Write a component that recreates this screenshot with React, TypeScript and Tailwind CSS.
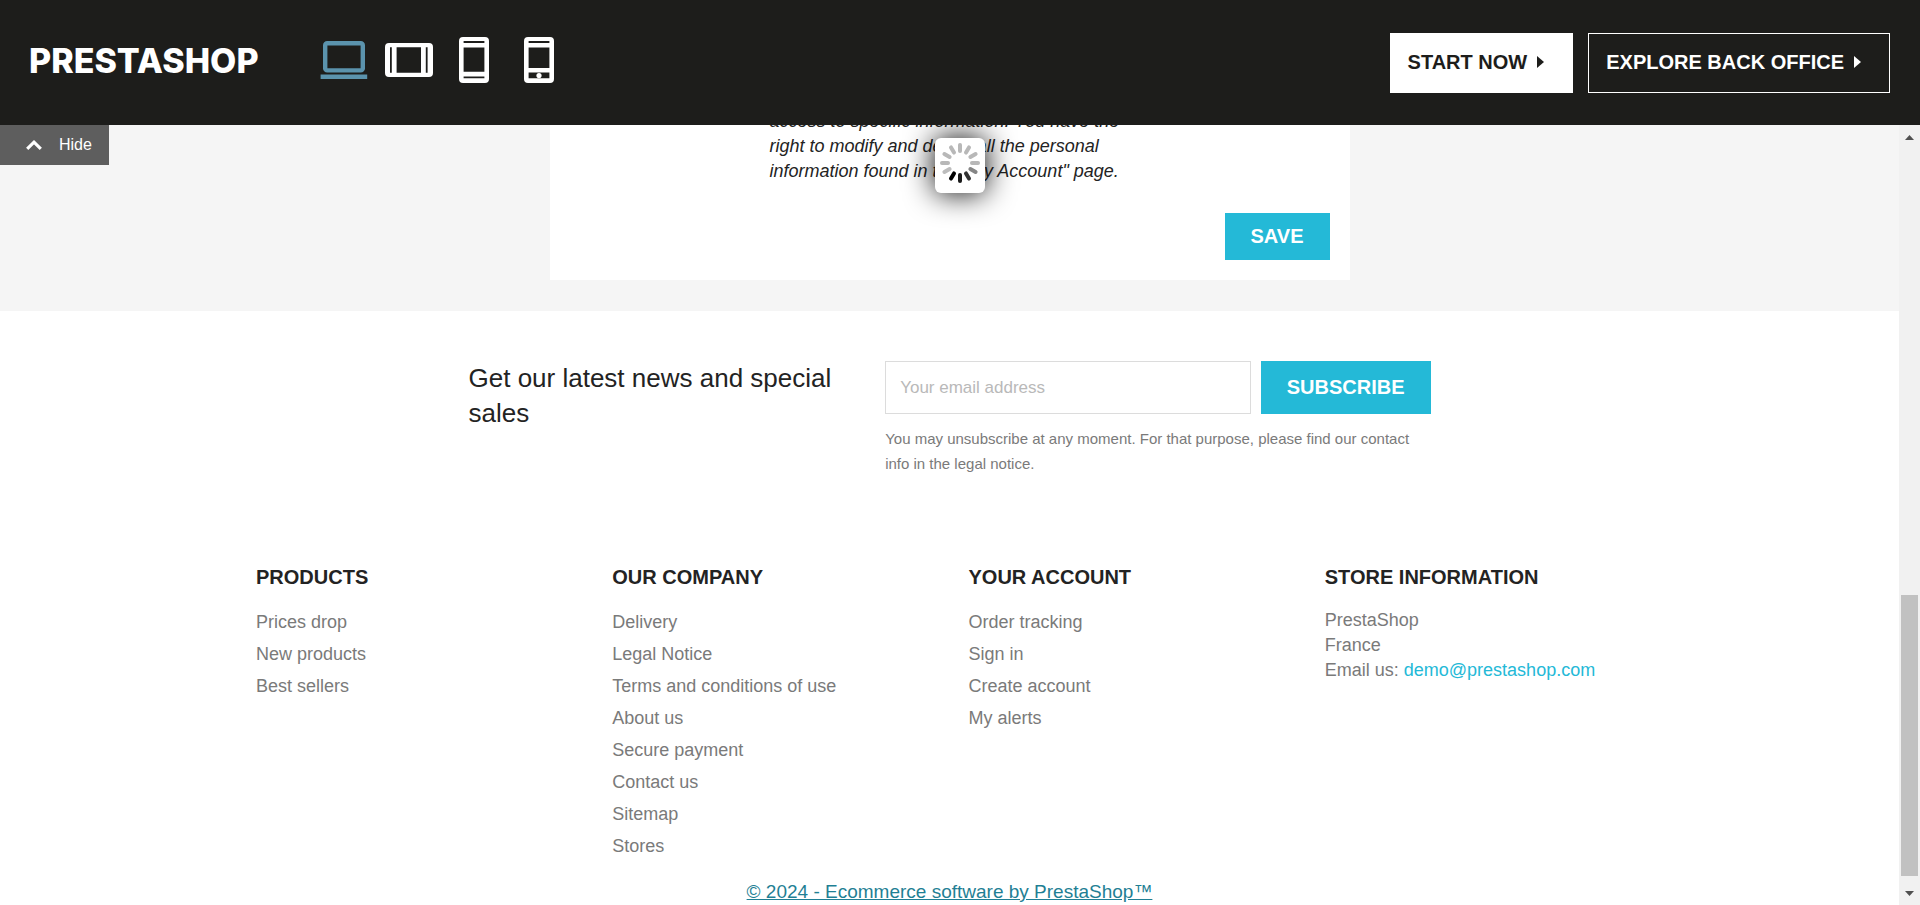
import type { ReactNode } from 'react';

type LinkGroup = { title: string; links: string[] };

const linkGroups: LinkGroup[] = [
  { title: 'PRODUCTS', links: ['Prices drop', 'New products', 'Best sellers'] },
  {
    title: 'OUR COMPANY',
    links: [
      'Delivery',
      'Legal Notice',
      'Terms and conditions of use',
      'About us',
      'Secure payment',
      'Contact us',
      'Sitemap',
      'Stores',
    ],
  },
  { title: 'YOUR ACCOUNT', links: ['Order tracking', 'Sign in', 'Create account', 'My alerts'] },
];

const spokes = [
  '#b8b8b8', '#b8b8b8', '#b8b8b8', '#b8b8b8', '#868686', '#333333',
  '#1a1a1a', '#000000', '#bdbdbd', '#b8b8b8', '#b8b8b8', '#b8b8b8',
];

function DeviceButton({ label, children }: { label: string; children: ReactNode }) {
  return (
    <button type="button" aria-label={label} className="flex w-12 cursor-pointer justify-center">
      {children}
    </button>
  );
}

function Devices() {
  return (
    <div className="flex items-center gap-[17px]">
      <DeviceButton label="Desktop">
        <svg width="48" height="46" viewBox="0 0 48 46">
          <rect x="5.2" y="6.2" width="37.6" height="27.2" rx="2" fill="none" stroke="#5b93ad" strokeWidth="4.4" />
          <rect x="0.6" y="37.5" width="46.6" height="4.5" fill="#5b93ad" />
        </svg>
      </DeviceButton>
      <DeviceButton label="Tablet landscape">
        <svg width="48" height="46" viewBox="0 0 48 46" fill="#fff" fillRule="evenodd">
          <path d="M4 6h40a4 4 0 0 1 4 4v26a4 4 0 0 1-4 4H4a4 4 0 0 1-4-4V10a4 4 0 0 1 4-4zM5 10.3v25.4h1.8v-25.4zM11.6 10.3v25.4h24.4v-25.4zM40.8 10.3v25.4h1.8v-25.4z" />
        </svg>
      </DeviceButton>
      <DeviceButton label="Tablet portrait">
        <svg width="30" height="46" viewBox="0 0 30 46" fill="#fff" fillRule="evenodd">
          <path d="M4 0h22a4 4 0 0 1 4 4v38a4 4 0 0 1-4 4H4a4 4 0 0 1-4-4V4a4 4 0 0 1 4-4zM4.6 4.1v1.9h20.8v-1.9zM4.6 10.6v24.2h20.8v-24.2zM4.6 39.4v1.9h20.8v-1.9z" />
        </svg>
      </DeviceButton>
      <DeviceButton label="Mobile">
        <svg width="30" height="46" viewBox="0 0 30 46" fill="#fff" fillRule="evenodd">
          <path d="M4 0h22a4 4 0 0 1 4 4v38a4 4 0 0 1-4 4H4a4 4 0 0 1-4-4V4a4 4 0 0 1 4-4zM4.6 4.1v1.9h20.8v-1.9zM4.6 10.6v20.4h20.8v-20.4zM4.6 35.6v5.7h20.8v-5.7z" />
          <circle cx="15" cy="38.5" r="2.6" />
        </svg>
      </DeviceButton>
    </div>
  );
}

function Caret() {
  return (
    <svg width="7" height="12" viewBox="0 0 7 12" fill="currentColor">
      <path d="M0 0l7 6-7 6z" />
    </svg>
  );
}

function Header() {
  return (
    <header className="relative z-10 flex h-[125px] shrink-0 items-center justify-between bg-[#1d1d1b] pr-[30px] pl-[29px]">
      <div className="flex items-center pb-[5px]">
        <a href="#home" className="w-[291px] pt-0.5 font-[Inter,sans-serif] text-[34px] leading-10 font-extrabold text-white">
          PRESTASHOP
        </a>
        <Devices />
      </div>
      <nav className="flex gap-[15px] text-xl font-bold">
        <a href="#start" className="flex h-[60px] items-center gap-2.5 border border-white bg-white pr-7 pb-0.5 pl-[17px] text-[#1d1d1b]">
          START NOW
          <Caret />
        </a>
        <a href="#office" className="flex h-[60px] items-center gap-2.5 border border-white pr-7 pb-0.5 pl-[17px] text-white">
          EXPLORE BACK OFFICE
          <Caret />
        </a>
      </nav>
    </header>
  );
}

function Spinner() {
  return (
    <div
      role="status"
      aria-label="Loading"
      className="absolute top-[13px] left-1/2 flex h-[55px] w-[50px] -translate-x-1/2 justify-center rounded-md bg-white pt-1 shadow-[0_0_30px_0_#000]"
    >
      <svg width="42" height="42" viewBox="-21 -21 42 42" strokeWidth="4" strokeLinecap="round">
        {spokes.map((color, i) => (
          <path key={i} d="M0 -12V-18" stroke={color} transform={`rotate(${i * 30})`} />
        ))}
      </svg>
    </div>
  );
}

function Newsletter() {
  return (
    <section className="mx-auto grid max-w-[1000px] grid-cols-12 pt-[50px]">
      <h2 className="col-span-5 px-[19px] text-[26px] leading-[35px] text-[#232323]">
        Get our latest news and special sales
      </h2>
      <form className="col-span-7 px-[19px]">
        <div className="flex gap-2.5">
          <input
            type="email"
            aria-label="Your email address"
            placeholder="Your email address"
            className="h-[53px] min-w-0 flex-1 border border-[#dcdcdc] px-3.5 text-[17px] placeholder:text-[#b9b9b9]"
          />
          <button type="button" className="h-[53px] bg-[#24b9d7] px-[26px] pb-0.5 text-xl font-bold text-white">
            SUBSCRIBE
          </button>
        </div>
        <p className="mt-3 text-[15px] leading-[25px] text-[#7a7a7a]">
          You may unsubscribe at any moment. For that purpose, please find our contact info in the legal notice.
        </p>
      </form>
    </section>
  );
}

function Footer() {
  return (
    <footer className="mx-auto max-w-[1425px]">
      <div className="grid grid-cols-4 pt-[86px] text-lg text-[#7a7a7a]">
        {linkGroups.map((group) => (
          <section key={group.title} className="px-[19px]">
            <h3 className="text-xl leading-[30px] font-bold text-[#232323]">{group.title}</h3>
            <ul className="mt-3.5">
              {group.links.map((link) => (
                <li key={link} className="leading-8">
                  <a href="#link">{link}</a>
                </li>
              ))}
            </ul>
          </section>
        ))}
        <section className="px-[19px]">
          <h3 className="text-xl leading-[30px] font-bold text-[#232323]">STORE INFORMATION</h3>
          <address className="mt-4 leading-[25px] not-italic">
            PrestaShop
            <br />
            France
            <br />
            Email us:{' '}
            <a href="#mail" className="text-[#24b9d7]">
              demo@prestashop.com
            </a>
          </address>
        </section>
      </div>
      <p className="mt-4 text-center text-[19px] leading-7">
        <a href="#software" className="text-[#1f7f94] underline">
          © 2024 - Ecommerce software by PrestaShop™
        </a>
      </p>
    </footer>
  );
}

function ScrollTrack() {
  return (
    <div aria-hidden="true" className="flex w-[21px] shrink-0 flex-col items-center bg-[#f1f1f1]">
      <div className="flex h-6 items-center">
        <svg width="9" height="5" viewBox="0 0 9 5" fill="#505050">
          <path d="M0 5L4.5 0 9 5z" />
        </svg>
      </div>
      <div className="grow-[446]" />
      <div className="w-[17px] grow-[281] bg-[#c1c1c1]" />
      <div className="flex h-[29px] items-center pt-1.5">
        <svg width="9" height="5" viewBox="0 0 9 5" fill="#505050">
          <path d="M0 0h9L4.5 5z" />
        </svg>
      </div>
    </div>
  );
}

export default function App() {
  return (
    <div className="flex h-screen flex-col overflow-hidden bg-white font-['Liberation_Sans',Arial,sans-serif]">
      <Header />
      <div className="relative flex min-h-0 flex-1">
        <main className="min-w-0 flex-1 overflow-hidden">
          <div className="bg-[#f5f5f5] pb-[31px]">
            <div className="mx-auto -mt-4 max-w-[800px] bg-white px-5 pb-5">
              <p className="ml-[200px] w-[370px] text-lg leading-[25px] text-[#232323] italic">
                access to specific information. You have the right to modify and delete all the personal information
                found in the "My Account" page.
              </p>
              <div className="mt-[29px] flex justify-end">
                <button type="button" className="h-[47px] bg-[#24b9d7] px-[26px] pb-0.5 text-xl font-bold text-white">
                  SAVE
                </button>
              </div>
            </div>
          </div>
          <Newsletter />
          <Footer />
        </main>
        <ScrollTrack />
        <button
          type="button"
          className="absolute top-0 left-0 flex h-10 w-[109px] items-center gap-[17px] bg-[#5e5e5e] pl-[26px] text-base text-white"
        >
          <svg width="16" height="10" viewBox="0 0 16 10" fill="none" stroke="#fff" strokeWidth="3.2">
            <path d="M1.2 8.8L8 2.2l6.8 6.6" />
          </svg>
          Hide
        </button>
        <Spinner />
      </div>
    </div>
  );
}
